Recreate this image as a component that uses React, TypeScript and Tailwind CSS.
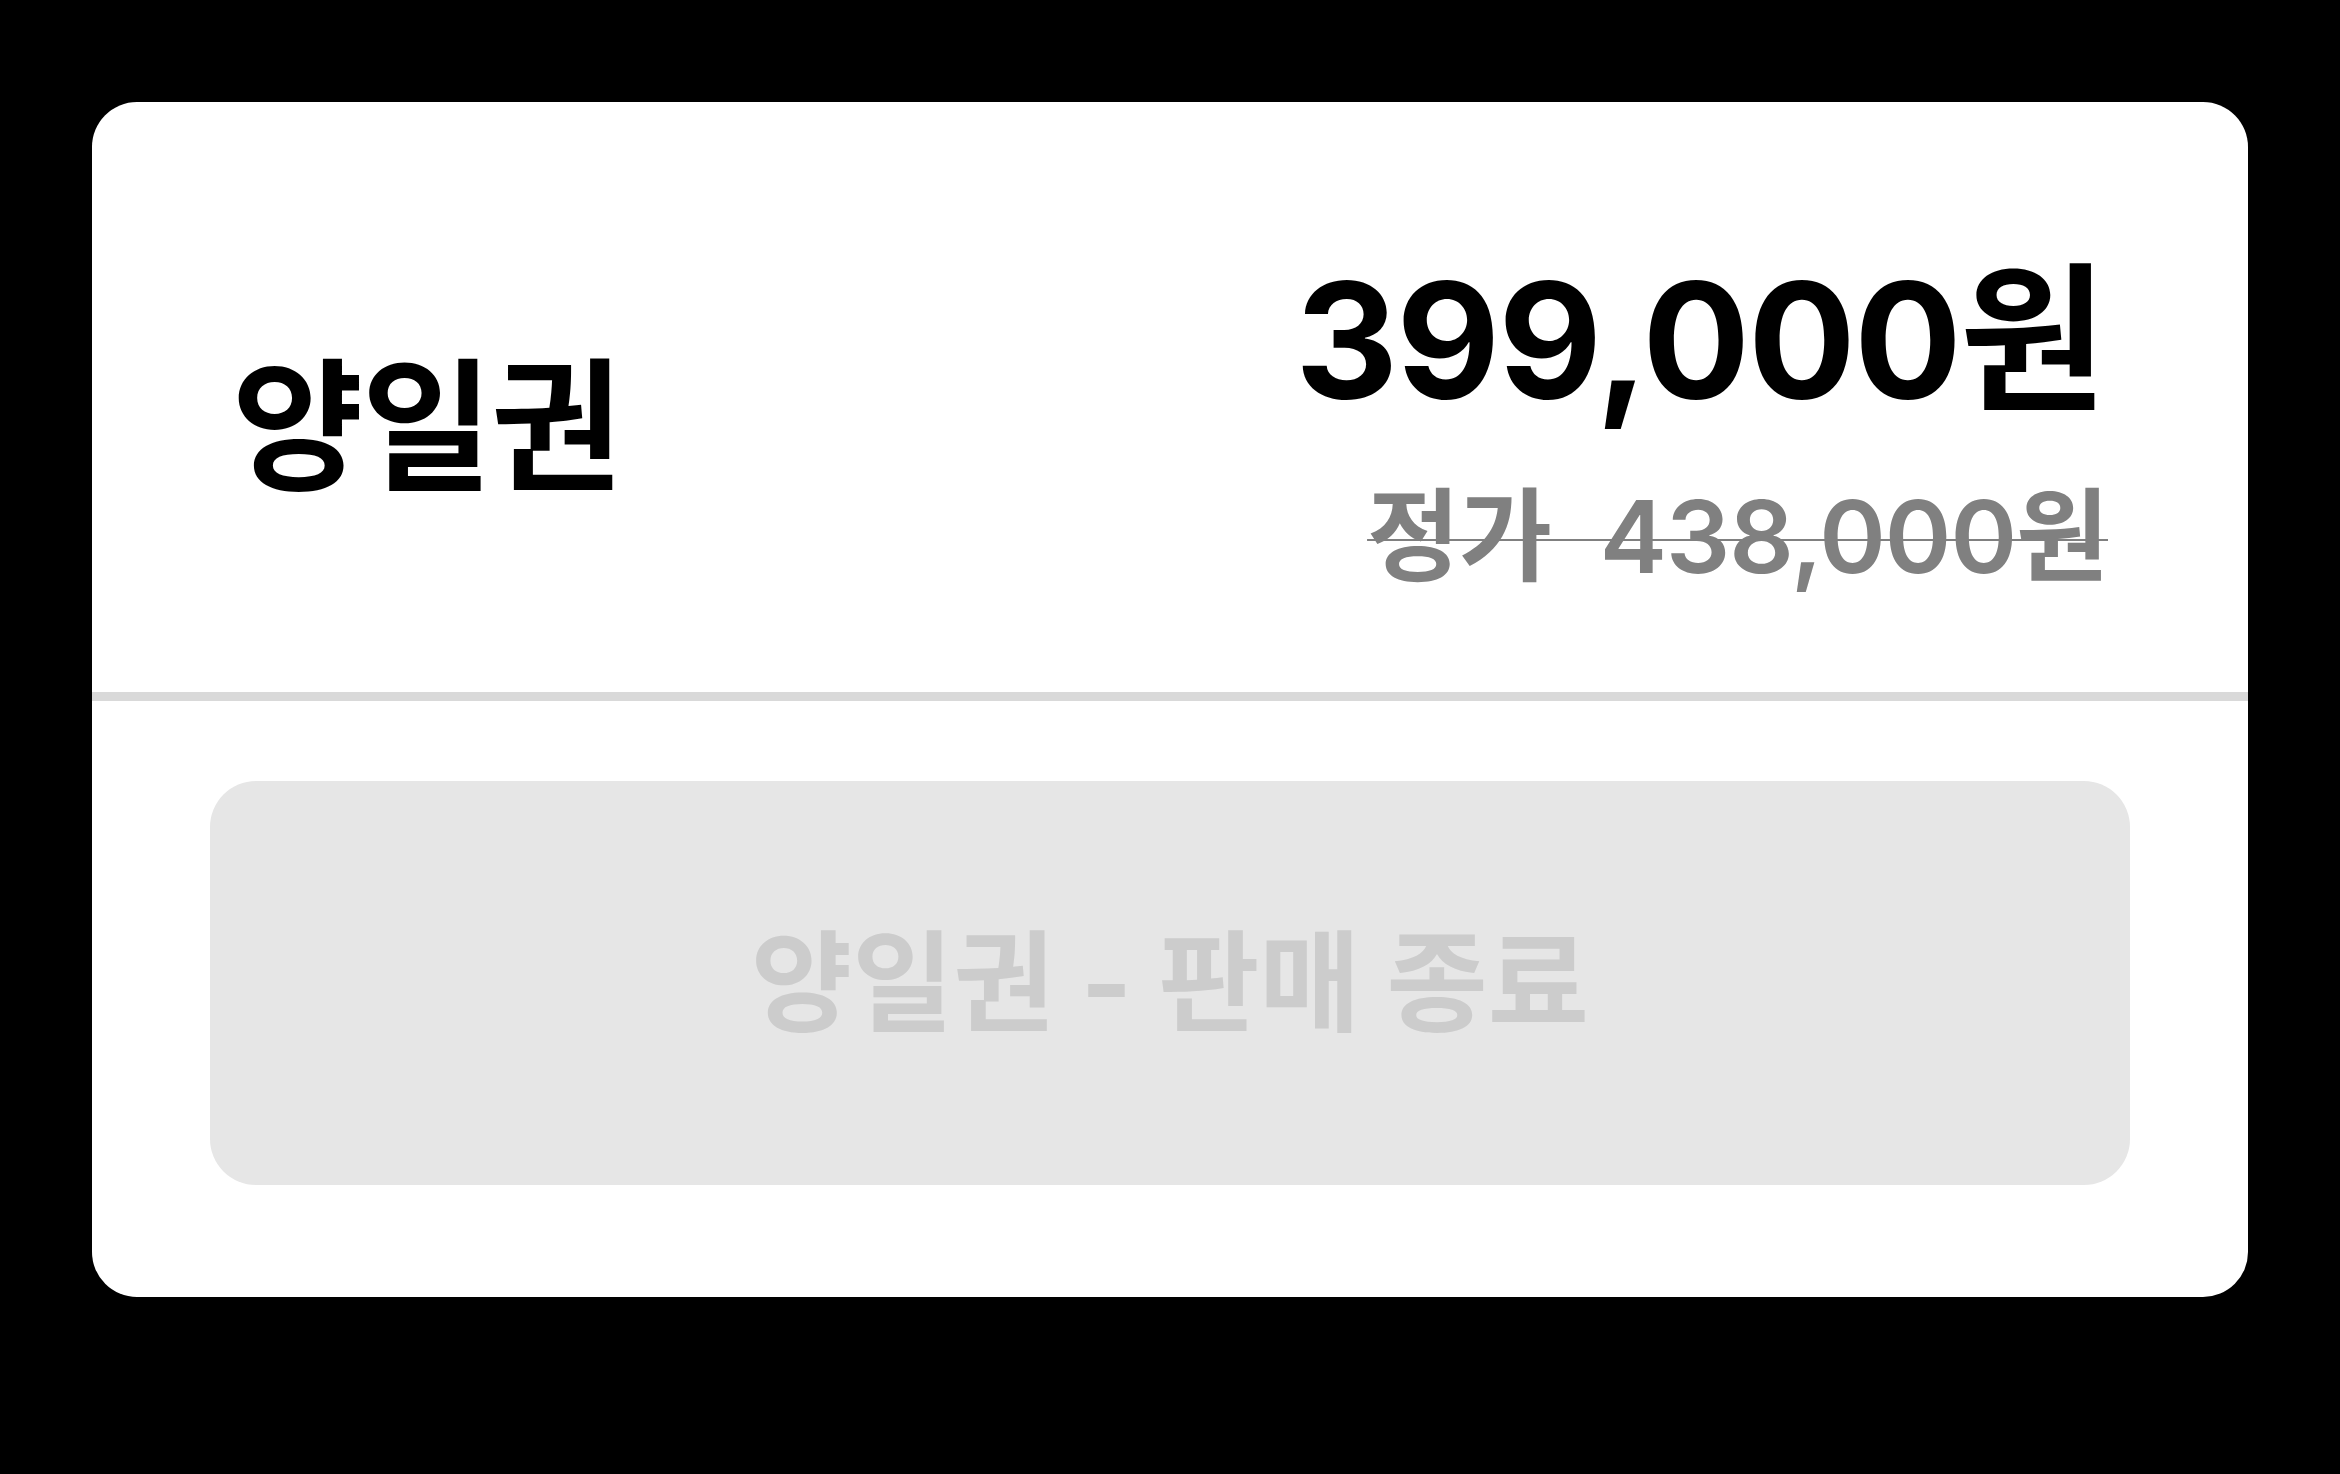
import React from 'react';

const font = { fontFamily: "Inter, 'Noto Sans CJK KR', sans-serif" };

const TicketCard: React.FC = () => {
  return (
    <div className="w-[2156px] h-[1195px] bg-white rounded-[45px] flex flex-col overflow-hidden">
      <div className="h-[590px] flex items-center justify-between px-[140px] pt-[52px]">
        <h2 className="text-[143px] font-bold leading-none text-black tracking-[-2px] mt-[6px]">양일권</h2>
        <div className="flex flex-col items-end">
          <div className="text-[160px] font-bold leading-none text-black tracking-[-2px] mr-[3px]">399,000원</div>
          <div className="mt-[66px] text-[101px] font-semibold leading-none text-[#808080] line-through decoration-[2px] whitespace-pre tracking-[-1px]">
            정가  438,000원
          </div>
        </div>
      </div>
      <div className="h-[9px] bg-[#d9d9d9]" />
      <div className="px-[118px] pt-[80px] pb-[112px] flex-1 flex">
        <button
          disabled
          className="flex-1 rounded-[46px] bg-[#e6e6e6] flex items-center justify-center text-[110px] font-bold text-[#cccccc] leading-none"
          style={font}
        >
          양일권 - 판매 종료
        </button>
      </div>
    </div>
  );
};

export default function App() {
  return (
    <div className="w-[2340px] h-[1474px] bg-black flex justify-center pt-[102px]" style={font}>
      <TicketCard />
    </div>
  );
}
